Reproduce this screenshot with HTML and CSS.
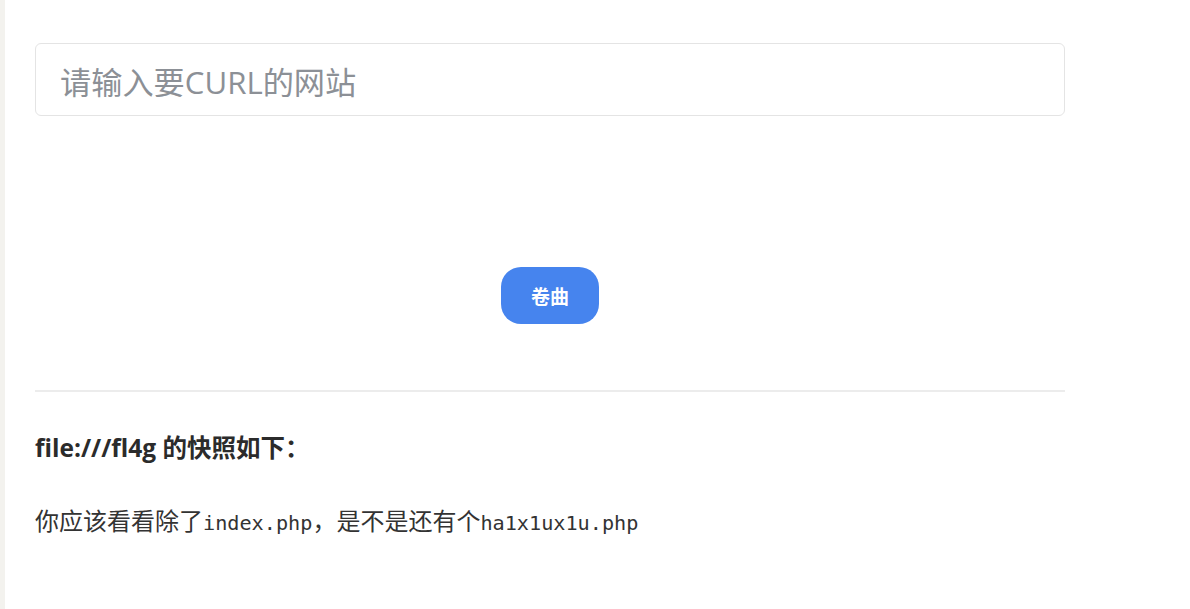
FILE: index.html
```html
<!DOCTYPE html>
<html lang="zh-CN">
<head>
<meta charset="utf-8">
<title>CURL</title>
<link rel="stylesheet" href="styles.css">
</head>
<body>
<div class="rail"></div>
<main class="main">
  <form class="curl-form">
    <input class="url-input" type="text" placeholder="请输入要CURL的网站">
    <button class="curl-btn" type="button">卷曲</button>
  </form>
  <div class="divider"></div>
  <h4 class="result-title">file:///fl4g 的快照如下：</h4>
  <p class="result-body"><span class="zh">你应该看看除了</span><span class="mono">index.php</span><span class="zh">，是不是还有个</span><span class="mono">ha1x1ux1u.php</span></p>
</main>
</body>
</html>
```
FILE: styles.css
```css
html, body {
  margin: 0;
  padding: 0;
  background: #ffffff;
}

body {
  display: flex;
  min-height: 100vh;
  font-family: "Open Sans", "Noto Sans CJK SC", sans-serif;
  color: #333333;
}

.rail {
  width: 5px;
  flex: none;
  background: #f3f2ee;
}

.main {
  width: 1030px;
  padding: 43px 0 0 30px;
}

.curl-form {
  display: flex;
  flex-direction: column;
}

.url-input {
  box-sizing: border-box;
  width: 100%;
  height: 73px;
  margin: 0;
  padding: 4px 24px 0;
  border: 1px solid #e4e4e4;
  border-radius: 6px;
  font-family: "Open Sans", "Noto Sans CJK SC", sans-serif;
  font-size: 31.2px;
  color: #333;
  outline: none;
  background: #fff;
}

.url-input::placeholder {
  color: #8c9096;
}

.curl-btn {
  align-self: center;
  margin-top: 151px;
  width: 98px;
  height: 57px;
  border: none;
  border-radius: 20px;
  background: #4684ee;
  color: #ffffff;
  font-family: "Open Sans", "Noto Sans CJK SC", sans-serif;
  font-size: 19px;
  font-weight: 700;
  padding: 0;
  cursor: pointer;
}

.divider {
  margin-top: 66px;
  height: 2px;
  background: #ececec;
}

.result-title {
  margin: 40px 0 0;
  font-size: 24.5px;
  line-height: 32px;
  font-weight: 700;
  color: #2b2b2b;
}

.result-body {
  margin: 41px 0 0;
  font-size: 20px;
  line-height: 30px;
  color: #333333;
}

.zh {
  font-family: "Noto Sans CJK SC", sans-serif;
  font-size: 24px;
}

.mono {
  font-family: "DejaVu Sans Mono", monospace;
  font-size: 20.2px;
}
```
